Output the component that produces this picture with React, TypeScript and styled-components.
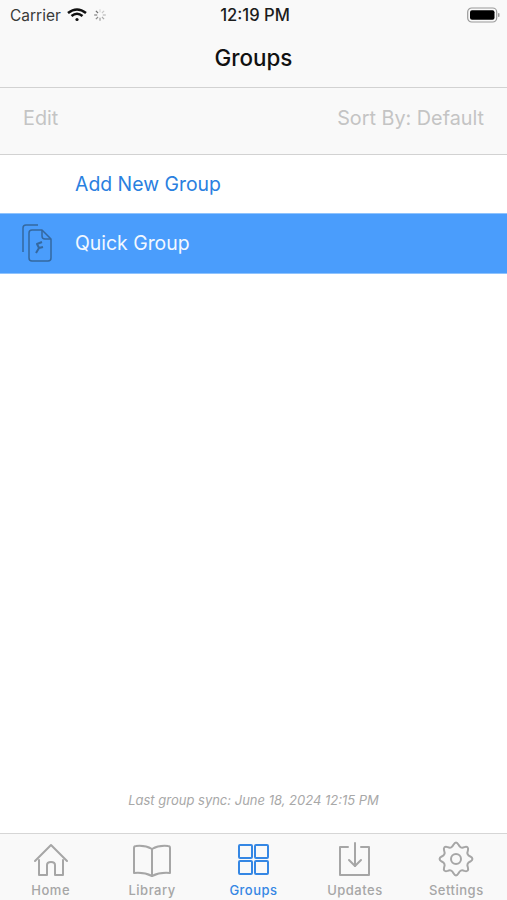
import React from 'react';
import styled, { createGlobalStyle } from 'styled-components';

const GlobalStyle = createGlobalStyle`
	html, body {
		margin: 0;
		padding: 0;
		background: #fff;
		font-family: Inter, 'Liberation Sans', sans-serif;
	}
`;

const Screen = styled.div`
	width: 507px;
	height: 900px;
	display: flex;
	flex-direction: column;
	background: #fff;
	overflow: hidden;
`;

const TopBar = styled.header`
	height: 87px;
	background: #f9f9f9;
	border-bottom: 1px solid #d2d2d2;
	display: flex;
	flex-direction: column;
`;

const StatusBar = styled.div`
	height: 30px;
	display: grid;
	grid-template-columns: 1fr auto 1fr;
	align-items: center;
	padding: 0 7px 0 10px;
`;

const StatusLeft = styled.div`
	display: flex;
	align-items: center;
	gap: 6px;
`;

const Carrier = styled.span`
	font-size: 15.5px;
	color: #3a3a3a;
`;

const Clock = styled.span`
	font-size: 16.6px;
	font-weight: 500;
	color: #1c1c1c;
`;

const StatusRight = styled.div`
	display: flex;
	justify-content: flex-end;
`;

const Title = styled.h1`
	margin: 0;
	flex: 1;
	display: flex;
	align-items: center;
	justify-content: center;
	padding-bottom: 2px;
	font-size: 22.4px;
	font-weight: 500;
	color: #111;
`;

const Toolbar = styled.div`
	height: 67px;
	box-sizing: border-box;
	background: #f9f9f9;
	border-bottom: 1px solid #d2d2d2;
	display: flex;
	align-items: center;
	justify-content: space-between;
	padding: 0 23px 7px 23px;
	font-size: 19.8px;
	color: #c4c4c4;
`;

const Row = styled.div<{ $selected?: boolean }>`
	height: ${(p) => (p.$selected ? 61 : 58)}px;
	box-sizing: border-box;
	display: flex;
	align-items: center;
	padding-bottom: ${(p) => (p.$selected ? 1 : 0)}px;
	background: ${(p) => (p.$selected ? '#4a9dfc' : '#fff')};
	border-top: ${(p) => (p.$selected ? '1px solid #8fc3fd' : 'none')};
	border-bottom: ${(p) => (p.$selected ? '1px solid #8fc3fd' : 'none')};
	color: ${(p) => (p.$selected ? '#f2f8ff' : '#2a80e0')};
	font-size: 19.4px;
`;

const RowIcon = styled.div`
	width: 75px;
	padding-left: 20px;
	box-sizing: border-box;
	display: flex;
	align-items: center;
`;

const Spacer = styled.div`
	flex: 1;
	display: flex;
	flex-direction: column;
	justify-content: flex-end;
	align-items: center;
	padding-bottom: 25px;
`;

const SyncNote = styled.p`
	margin: 0;
	font-size: 13px;
	font-style: italic;
	color: #a8a8a8;
`;

const TabBar = styled.nav`
	height: 67px;
	box-sizing: border-box;
	background: #f9f9f9;
	border-top: 1px solid #d6d6d6;
	display: grid;
	grid-template-columns: repeat(5, 1fr);
`;

const Tab = styled.div<{ $active?: boolean }>`
	display: flex;
	flex-direction: column;
	align-items: center;
	justify-content: flex-end;
	padding-bottom: 2px;
	gap: 4px;
	font-size: 13px;
	font-weight: 500;
	letter-spacing: 0.5px;
	color: ${(p) => (p.$active ? '#3587e4' : '#a6a6a6')};
`;

const TabGlyph = styled.svg`
	width: 40px;
	height: 38px;
	fill: none;
	stroke: currentColor;
	stroke-width: 2;
	stroke-linejoin: round;
	stroke-linecap: round;
`;

function Spinner() {
	const spokes = Array.from({ length: 8 }, (_, i) => i);
	return (
		<svg width="14" height="14" viewBox="0 0 14 14">
			{spokes.map((i) => (
				<line
					key={i}
					x1="7"
					y1="1.2"
					x2="7"
					y2="4.2"
					stroke="#555"
					strokeWidth="1.2"
					opacity={0.2 + i * 0.09}
					transform={`rotate(${i * 45} 7 7)`}
				/>
			))}
		</svg>
	);
}

// rounded 8 lobe outline for the settings tab
function gearPath() {
	const pt = (deg: number, r: number) => {
		const a = (deg * Math.PI) / 180;
		return `${(20 + r * Math.cos(a)).toFixed(2)} ${(19 + r * Math.sin(a)).toFixed(2)}`;
	};
	let d = `M${pt(-10, 14.5)}`;
	for (let k = 0; k < 8; k++) {
		const a = k * 45;
		d += ` Q${pt(a, 18.6)} ${pt(a + 10, 14.5)}`;
		d += ` Q${pt(a + 22.5, 11)} ${pt(a + 35, 14.5)}`;
	}
	return d + ' Z';
}

const tabs = [
	{
		label: 'Home',
		icon: (
			<>
				<path d="M4 21 L20 5 L36 21" />
				<path d="M8 20 V35 H16 V25 Q16 22 20 22 Q24 22 24 25 V35 H32 V20" />
			</>
		),
	},
	{
		label: 'Library',
		icon: (
			<>
				<path d="M20 9 Q13 5 4 6 Q2 6 2 8 V33 Q12 32 20 36 Q28 32 38 33 V8 Q38 6 36 6 Q27 5 20 9 Z" />
				<path d="M20 9 V36" />
			</>
		),
	},
	{
		label: 'Groups',
		active: true,
		icon: (
			<>
				<rect x="6" y="5" width="13" height="13" rx="1" />
				<rect x="22" y="5" width="13" height="13" rx="1" />
				<rect x="6" y="21" width="13" height="13" rx="1" />
				<rect x="22" y="21" width="13" height="13" rx="1" />
			</>
		),
	},
	{
		label: 'Updates',
		icon: (
			<>
				<path d="M13 7 H5 V35 H34 V7 H26" />
				<path d="M20 3 V26" />
				<path d="M14 20 L20 26 L26 20" />
			</>
		),
	},
	{
		label: 'Settings',
		icon: (
			<>
				<path d={gearPath()} />
				<circle cx="20" cy="19" r="5" />
			</>
		),
	},
];

export default function App() {
	return (
		<Screen>
			<GlobalStyle />
			<TopBar>
				<StatusBar>
					<StatusLeft>
						<Carrier>Carrier</Carrier>
						<svg width="20" height="14" viewBox="0 0 20 14" fill="none" stroke="#111" strokeWidth="2.6">
							<path d="M1 5 Q10 -2 19 5" />
							<path d="M4.5 8 Q10 3.5 15.5 8" />
							<circle cx="10" cy="11.5" r="1.6" fill="#111" stroke="none" />
						</svg>
						<Spinner />
					</StatusLeft>
					<Clock>12:19 PM</Clock>
					<StatusRight>
						<svg width="33" height="16" viewBox="0 0 33 16">
							<rect x="0.7" y="1" width="29" height="14" rx="4" fill="none" stroke="#9a9a9a" strokeWidth="1.2" />
							<rect x="3" y="3.2" width="24.5" height="9.6" rx="2" fill="#000" />
							<rect x="31" y="6" width="1.5" height="4" rx="0.7" fill="#9a9a9a" />
						</svg>
					</StatusRight>
				</StatusBar>
				<Title>Groups</Title>
			</TopBar>
			<Toolbar>
				<span>Edit</span>
				<span>Sort By: Default</span>
			</Toolbar>
			<Row>
				<RowIcon />
				Add New Group
			</Row>
			<Row $selected>
				<RowIcon>
					<svg width="34" height="40" viewBox="0 0 34 40" fill="none" stroke="#35689f" strokeWidth="1.5" strokeLinejoin="round">
						<path d="M3 29 V5 Q3 2 6 2 H18" />
						<path d="M9 10 Q9 7 12 7 H22 L31 16 V35 Q31 38 28 38 H12 Q9 38 9 35 Z" />
						<path d="M22 7 V13 Q22 16 25 16 H31" />
						<path d="M22 19 L17 21 L19 25 L16 30 M19 25 L23 24" strokeWidth="2" />
					</svg>
				</RowIcon>
				Quick Group
			</Row>
			<Spacer>
				<SyncNote>Last group sync: June 18, 2024 12:15 PM</SyncNote>
			</Spacer>
			<TabBar>
				{tabs.map((t) => (
					<Tab key={t.label} $active={t.active}>
						<TabGlyph viewBox="0 0 40 38">{t.icon}</TabGlyph>
						{t.label}
					</Tab>
				))}
			</TabBar>
		</Screen>
	);
}
